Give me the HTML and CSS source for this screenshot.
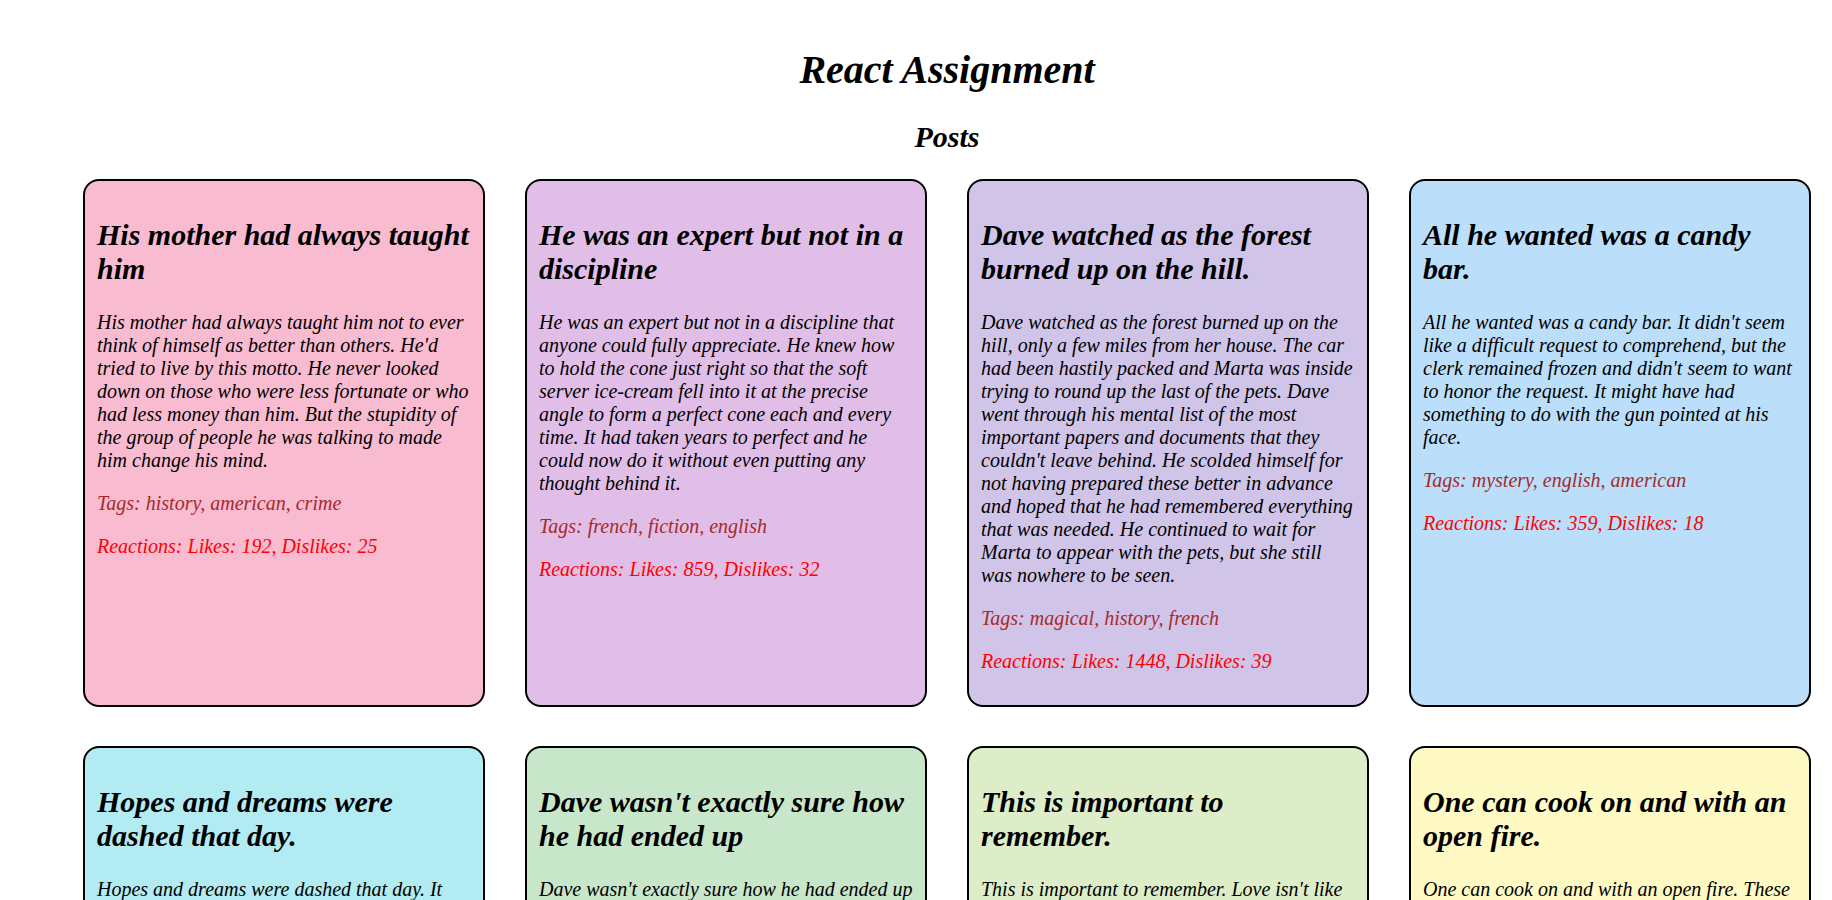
FILE: index.html
```html
<!DOCTYPE html>
<html lang="en">
<head>
<meta charset="utf-8">
<title>React Assignment</title>
<link rel="stylesheet" href="styles.css">
</head>
<body>
<div class="app">
  <h1 class="app-title">React Assignment</h1>
  <h2 class="section-title">Posts</h2>
  <div class="posts">
    <div class="post pink">
      <h2 class="post-title">His mother had always taught him</h2>
      <p class="post-body">His mother had always taught him not to ever think of himself as better than others. He'd tried to live by this motto. He never looked down on those who were less fortunate or who had less money than him. But the stupidity of the group of people he was talking to made him change his mind.</p>
      <p class="post-tags">Tags: history, american, crime</p>
      <p class="post-reactions">Reactions: Likes: 192, Dislikes: 25</p>
    </div>
    <div class="post purple">
      <h2 class="post-title">He was an expert but not in a discipline</h2>
      <p class="post-body">He was an expert but not in a discipline that anyone could fully appreciate. He knew how to hold the cone just right so that the soft server ice-cream fell into it at the precise angle to form a perfect cone each and every time. It had taken years to perfect and he could now do it without even putting any thought behind it.</p>
      <p class="post-tags">Tags: french, fiction, english</p>
      <p class="post-reactions">Reactions: Likes: 859, Dislikes: 32</p>
    </div>
    <div class="post lavender">
      <h2 class="post-title">Dave watched as the forest burned up on the hill.</h2>
      <p class="post-body">Dave watched as the forest burned up on the hill, only a few miles from her house. The car had been hastily packed and Marta was inside trying to round up the last of the pets. Dave went through his mental list of the most important papers and documents that they couldn't leave behind. He scolded himself for not having prepared these better in advance and hoped that he had remembered everything that was needed. He continued to wait for Marta to appear with the pets, but she still was nowhere to be seen.</p>
      <p class="post-tags">Tags: magical, history, french</p>
      <p class="post-reactions">Reactions: Likes: 1448, Dislikes: 39</p>
    </div>
    <div class="post blue">
      <h2 class="post-title">All he wanted was a candy bar.</h2>
      <p class="post-body">All he wanted was a candy bar. It didn't seem like a difficult request to comprehend, but the clerk remained frozen and didn't seem to want to honor the request. It might have had something to do with the gun pointed at his face.</p>
      <p class="post-tags">Tags: mystery, english, american</p>
      <p class="post-reactions">Reactions: Likes: 359, Dislikes: 18</p>
    </div>
    <div class="post cyan">
      <h2 class="post-title">Hopes and dreams were dashed that day.</h2>
      <p class="post-body">Hopes and dreams were dashed that day. It should have been expected, but it still came as a shock. The warning signs had been ignored in favor of the possibility, however remote, that it could actually happen. That possibility had grown from hope to an undeniable belief it must be destiny. That was until it wasn't and the hopes and dreams came crashing down.</p>
      <p class="post-tags">Tags: crime, mystery, love</p>
      <p class="post-reactions">Reactions: Likes: 119, Dislikes: 30</p>
    </div>
    <div class="post green">
      <h2 class="post-title">Dave wasn't exactly sure how he had ended up</h2>
      <p class="post-body">Dave wasn't exactly sure how he had ended up in this predicament. He ran through all the events that had lead to this current situation and it still didn't make sense. He wanted to spend some time to try and make sense of it all, but he had higher priorities at the moment. The first was how to get out of his current situation of being naked in a tree with snow falling all around and no way for him to get down.</p>
      <p class="post-tags">Tags: english, french, american</p>
      <p class="post-reactions">Reactions: Likes: 15, Dislikes: 8</p>
    </div>
    <div class="post lime">
      <h2 class="post-title">This is important to remember.</h2>
      <p class="post-body">This is important to remember. Love isn't like pie. You don't need to divide it among all your friends and loved ones. No matter how much love you give, you can always give more. It doesn't run out, so don't try to hold back giving it as if it may one day run out. Give it freely and as much as you want.</p>
      <p class="post-tags">Tags: magical, crime</p>
      <p class="post-reactions">Reactions: Likes: 127, Dislikes: 26</p>
    </div>
    <div class="post yellow">
      <h2 class="post-title">One can cook on and with an open fire.</h2>
      <p class="post-body">One can cook on and with an open fire. These are some of the ways to cook with fire outside. Cooking meat using a spit is a great way to evenly cook meat. In order to keep meat from burning, it's best to slowly rotate it.</p>
      <p class="post-tags">Tags: american, english</p>
      <p class="post-reactions">Reactions: Likes: 1271, Dislikes: 36</p>
    </div>
  </div>
</div>
</body>
</html>
```

FILE: styles.css
```css
html, body {
  margin: 0;
  padding: 0;
}

body {
  margin: 8px;
  font-family: "Liberation Serif", "Times New Roman", serif;
  font-style: italic;
  font-size: 20px;
  color: #000;
  background: #fff;
}

.app {
  padding-top: 11px;
  padding-left: 62px;
}

.app-title {
  font-size: 40px;
  font-weight: bold;
  text-align: center;
  margin: 27px 0;
}

.section-title {
  font-size: 30px;
  font-weight: bold;
  text-align: center;
  margin: 25px 0;
}

.posts {
  display: grid;
  grid-template-columns: repeat(4, 402px);
  justify-content: center;
  gap: 39px 40px;
}

.post {
  box-sizing: border-box;
  border: 2px solid #000;
  border-radius: 16px;
  padding: 12px;
}

.post-title {
  font-size: 30px;
  font-weight: bold;
  margin: 25px 0;
}

.post-body,
.post-tags,
.post-reactions {
  margin: 20px 0;
}

.post-tags {
  color: #a52a2a;
}

.post-reactions {
  color: #ff0000;
}

.pink { background: #f8bbd0; }
.purple { background: #e1bee7; }
.lavender { background: #d1c4e9; }
.blue { background: #bbdefb; }
.cyan { background: #b2ebf2; }
.green { background: #c8e6c9; }
.lime { background: #dcedc8; }
.yellow { background: #fff9c4; }
```
